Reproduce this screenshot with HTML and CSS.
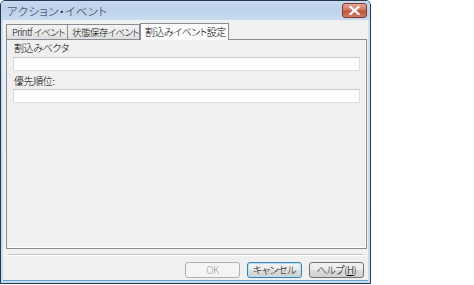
FILE: index.html
```html
<!DOCTYPE html>
<html lang="ja">
<head>
<meta charset="utf-8">
<link rel="stylesheet" href="styles.css">
</head>
<body>
<div class="window">
  <div class="titlebar">
    <span class="title">アクション・イベント</span>
    <span class="close">
      <svg width="11" height="9" viewBox="0 0 11 9"><path d="M1.5 1 L9.5 8 M9.5 1 L1.5 8" stroke="#fff" stroke-width="2.2" stroke-linecap="square"/></svg>
    </span>
  </div>
  <div class="client">
    <div class="tabs">
      <div class="tab t1">Printf&nbsp;イベント</div>
      <div class="tab t2">状態保存イベント</div>
      <div class="tab active">割込みイベント設定</div>
    </div>
    <div class="panel">
      <div class="label">割込みベクタ</div>
      <div class="input"></div>
      <div class="label second">優先順位:</div>
      <div class="input"></div>
    </div>
    <div class="separator"></div>
    <div class="buttons">
      <div class="btn disabled">OK</div>
      <div class="btn focus">キャンセル</div>
      <div class="btn">ヘルプ(<u>H</u>)</div>
    </div>
  </div>
</div>
</body>
</html>
```

FILE: styles.css
```css
html, body {
  margin: 0;
  padding: 0;
  background: #ffffff;
}
body {
  font-family: "Noto Sans CJK JP", "Noto Sans", sans-serif;
  font-feature-settings: "palt";
  font-size: 10px;
  font-weight: 300;
  letter-spacing: -0.4px;
  color: #000;
}
.window {
  box-sizing: border-box;
  width: 371px;
  height: 284px;
  border: 1px solid #243a4c;
  border-radius: 5px 5px 0 0;
  background: linear-gradient(#bdd3ea, #cfe0f2 20px, #c9dcef);
  display: flex;
  flex-direction: column;
  overflow: hidden;
}
.titlebar {
  height: 19px;
  display: flex;
  align-items: center;
  justify-content: space-between;
  padding: 0 3px 0 6px;
  background: linear-gradient(#c5d9ef, #bcd2ea 50%, #c8dbf0);
}
.title {
  font-size: 11.5px;
  color: #1e2b38;
  letter-spacing: 0.4px;
  line-height: 18px;
}
.close {
  width: 23px;
  height: 13px;
  border: 1px solid #7a3a2f;
  border-radius: 3px;
  background: linear-gradient(#e3a898, #cf7764 45%, #c0553f 55%, #d07a64);
  display: flex;
  align-items: center;
  justify-content: center;
  margin-top: -1px;
}
.client {
  flex: 1;
  margin: 0 2px 2px 2px;
  background: #f0f0f0;
  border-bottom: 1px solid #5fa8d3;
  display: flex;
  flex-direction: column;
  padding: 2px 1px 0 3px;
}
.tabs {
  display: flex;
  align-items: flex-end;
  height: 17px;
  position: relative;
  z-index: 1;
}
.tab {
  box-sizing: border-box;
  height: 15px;
  border: 1px solid #898c95;
  border-bottom: none;
  background: linear-gradient(#f3f3f3, #ebebeb 50%, #dddddd);
  padding: 0 0 0 5px;
  line-height: 14px;
  white-space: nowrap;
  margin-right: -1px;
  font-size: 9.5px;
  letter-spacing: -0.6px;
}
.t1 { width: 62px; }
.t2 { width: 73px; padding-left: 4px; }
.tab.active {
  height: 17px;
  width: 89px;
  background: #fcfcfc;
  margin-left: 1px;
  line-height: 15px;
  margin-bottom: -1px;
  padding-left: 4px;
  font-size: 10px;
  letter-spacing: -0.5px;
}
.panel {
  box-sizing: border-box;
  height: 210px;
  width: 361px;
  border: 1px solid #898c95;
  background: #f0f0f0;
  box-shadow: inset -1px -1px 0 #ffffff;
  padding: 2px 6px 0 6px;
}
.label {
  line-height: 12px;
  padding-left: 1px;
}
.label.second {
  margin-top: 4px;
}
.input {
  box-sizing: border-box;
  height: 14px;
  margin-top: 3px;
  border: 1px solid #dcdfe2;
  border-top-color: #c8cbcf;
  background: #ffffff;
}
.label.second + .input {
  margin-top: 2px;
}
.separator {
  margin: 5px 4px 0 3px;
  border-top: 1px solid #c6c6c6;
  border-bottom: 1px solid #ffffff;
  height: 0;
}
.buttons {
  display: flex;
  justify-content: flex-end;
  gap: 7px;
  padding: 6px 3px 0 0;
}
.btn {
  box-sizing: border-box;
  width: 55px;
  height: 16px;
  border: 1px solid #707070;
  border-radius: 3px;
  background: linear-gradient(#f2f2f2, #ebebeb 50%, #dddddd 51%, #cfcfcf);
  text-align: center;
  line-height: 14px;
}
.btn u { text-decoration: underline; }
.btn.focus {
  border-color: #3c7fb1;
  box-shadow: inset 0 0 0 1px #b5e2f7;
}
.btn.disabled {
  border-color: #adb2b5;
  background: #f4f4f4;
  color: #a0a0a0;
}
```
